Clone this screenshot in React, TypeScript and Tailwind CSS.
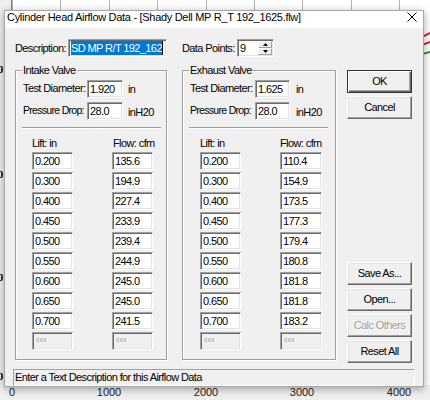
import React from 'react';

const INTAKE: [string, string][] = [
  ['0.200', '135.6'],
  ['0.300', '194.9'],
  ['0.400', '227.4'],
  ['0.450', '233.9'],
  ['0.500', '239.4'],
  ['0.550', '244.9'],
  ['0.600', '245.0'],
  ['0.650', '245.0'],
  ['0.700', '241.5'],
];

const EXHAUST: [string, string][] = [
  ['0.200', '110.4'],
  ['0.300', '154.9'],
  ['0.400', '173.5'],
  ['0.450', '177.3'],
  ['0.500', '179.4'],
  ['0.550', '180.8'],
  ['0.600', '181.8'],
  ['0.650', '181.8'],
  ['0.700', '183.2'],
];

const AXIS_X = ['0', '1000', '2000', '3000', '4000'];
const AXIS_Y = [66, 171, 274, 373];

// classic sunken edit box edge
const sunken =
  'border border-t-[#a0a0a0] border-l-[#a0a0a0] border-b-white border-r-white shadow-[inset_1px_1px_0_#696969,inset_-1px_-1px_0_#e3e3e3]';

function Field({ value, className = '' }: { value?: string; className?: string }): JSX.Element {
  if (value === undefined) {
    // disabled empty cell
    return (
      <div className={`${sunken} h-[18px] bg-[#f0f0f0] pl-[3px] pt-[3px] ${className}`}>
        <span className="block text-[7px] leading-[7px] text-[#a0a0a0] tracking-normal">xxx</span>
      </div>
    );
  }
  return (
    <div className={`${sunken} h-[18px] bg-white pl-[2px] flex items-center ${className}`}>
      <span className="leading-[13px]">{value}</span>
    </div>
  );
}

function Btn({
  children,
  isDefault = false,
  disabled = false,
  className = '',
}: {
  children: React.ReactNode;
  isDefault?: boolean;
  disabled?: boolean;
  className?: string;
}): JSX.Element {
  const edge = isDefault
    ? 'border border-[#333] shadow-[inset_1px_1px_0_#fff,inset_-1px_-1px_0_#696969,inset_-2px_-2px_0_#a0a0a0]'
    : 'border border-t-white border-l-white border-b-[#696969] border-r-[#696969] shadow-[inset_-1px_-1px_0_#a0a0a0,inset_1px_1px_0_#e3e3e3]';
  return (
    <div
      className={`${edge} h-[23px] w-[65px] bg-[#f0f0f0] flex items-center justify-center whitespace-nowrap ${
        disabled ? 'text-[#a0a0a0] [text-shadow:1px_1px_0_#fff]' : 'text-black'
      } ${className}`}
    >
      {children}
    </div>
  );
}

type GroupProps = {
  title: string;
  width: string;
  labelW: string;
  inputW: string;
  unitMl: string;
  gridPl: string;
  headW: string;
  flowW: string;
  diameter: string;
  rows: [string, string][];
};

function ValveGroup(p: GroupProps): JSX.Element {
  return (
    <div
      className={`relative ${p.width} h-[290px] border border-[#a0a0a0] shadow-[inset_1px_1px_0_#fff,1px_1px_0_#fff] pt-[9px] pl-[7px] whitespace-nowrap`}
    >
      <span className="absolute -top-[7px] left-[6px] px-[1px] bg-[#f0f0f0] leading-[13px]">{p.title}</span>

      <div className="flex items-center h-[18px]">
        <span className={`${p.labelW} shrink-0 leading-[13px] -mt-[1px]`}>Test Diameter:</span>
        <Field value={p.diameter} className={`${p.inputW} shrink-0`} />
        <span className={`${p.unitMl} leading-[13px]`}>in</span>
      </div>
      <div className="flex items-center h-[18px] mt-[4px]">
        <span className={`${p.labelW} shrink-0 leading-[13px] -mt-[2px] text-[10.5px] tracking-[-0.7px]`}>
          Pressure Drop:
        </span>
        <Field value="28.0" className={`${p.inputW} shrink-0`} />
        <span className={`${p.unitMl} leading-[13px] mt-[3px]`}>inH20</span>
      </div>

      <div className="-ml-[1px] mt-[7px] w-[139px] border-t border-t-[#a0a0a0] border-b border-b-white" />

      <div className={`flex ${p.gridPl} mt-[8px] leading-[13px]`}>
        <span className={p.headW}>Lift: in</span>
        <span>Flow: cfm</span>
      </div>

      <div className={`flex flex-col gap-[2px] mt-[2px] ${p.gridPl}`}>
        {p.rows.map(([lift, flow]) => (
          <div key={lift} className="flex">
            <Field value={lift} className="w-[41px]" />
            <Field value={flow} className={`ml-[39px] ${p.flowW}`} />
          </div>
        ))}
        <div className="flex">
          <Field className="w-[41px]" />
          <Field className={`ml-[39px] ${p.flowW}`} />
        </div>
      </div>
    </div>
  );
}

function App(): JSX.Element {
  return (
    <div className="relative w-[430px] h-[400px] overflow-hidden bg-[#f0f0f0] text-black font-['Liberation_Sans',Arial,sans-serif]">
      {/* chart behind the dialog */}
      <div className="absolute left-[11px] top-0 w-[419px] h-[385px] bg-white border-l border-l-[#808080]" />
      {Array.from({ length: 9 }).map((_, i) => (
        <div
          key={i}
          className="absolute top-0 h-[385px] w-px bg-[#b4b4b4]"
          style={{ left: Math.round(12 + i * 48.4) }}
        />
      ))}
      {AXIS_X.map((t, i) => (
        <span
          key={t}
          className="absolute top-[386px] -translate-x-1/2 text-[11px] leading-[12px] text-[#222]"
          style={{ left: Math.round(12 + i * 96.8) }}
        >
          {t}
        </span>
      ))}
      {/* y axis tick labels peeking out at the left edge */}
      {AXIS_Y.map((y) => (
        <div
          key={y}
          className="absolute left-0 w-[3px] h-[7px] border-r-2 border-y border-[#333] rounded-r-[2px]"
          style={{ top: y }}
        />
      ))}
      <svg className="absolute left-[422px] top-[28px]" width="8" height="32" viewBox="0 0 8 32">
        <path d="M0 9 L8 5" stroke="#e02020" strokeWidth="2" fill="none" />
        <path d="M0 17 L8 14" stroke="#e02020" strokeWidth="2" fill="none" />
        <path d="M0 26 L8 24" stroke="#20a020" strokeWidth="2" fill="none" />
      </svg>

      {/* dialog window */}
      <div className="absolute left-[4px] top-[10px] w-[420px] h-[377px] bg-[#f0f0f0] border border-[#a8a8a8] shadow-[0_2px_8px_rgba(0,0,0,0.35)] text-[11px] tracking-[-0.6px]">
        <div className="h-[17px] bg-white flex items-start justify-between pl-[2px] pr-[6px]">
          <span className="text-[11px] leading-[10px] tracking-[-0.3px] mt-[1px] whitespace-nowrap">
            Cylinder Head Airflow Data - [Shady Dell MP R_T 192_1625.flw]
          </span>
          <svg width="10" height="10" viewBox="0 0 10 10" className="mt-[1px]">
            <path d="M0.5 0.5 L9.5 9.5 M9.5 0.5 L0.5 9.5" stroke="#000" strokeWidth="1" fill="none" />
          </svg>
        </div>

        <div className="pl-[10px] pt-[11px] pb-[3px]">
          <div className="flex items-center h-[18px] whitespace-nowrap">
            <span className="w-[53px] leading-[13px]">Description:</span>
            <div className={`${sunken} w-[99px] h-[18px] bg-white pl-[2px] flex items-center overflow-hidden`}>
              <span className="bg-[#0078d7] text-white leading-[14px] h-[14px]">SD MP R/T 192_162</span>
              <span className="w-px h-[14px] bg-black" />
            </div>
            <span className="ml-[15px] w-[55px] leading-[13px]">Data Points:</span>
            <div className={`${sunken} w-[37px] h-[18px] bg-white flex`}>
              <span className="flex-1 pl-[2px] leading-[16px]">9</span>
              <div className="w-[15px] flex flex-col py-[1px] pr-[1px]">
                <div className="h-[7px] border border-t-white border-l-white border-b-[#a0a0a0] border-r-[#a0a0a0] bg-[#f0f0f0] flex items-center justify-center">
                  <svg width="5" height="3" viewBox="0 0 5 3">
                    <path d="M2.5 0 L5 3 L0 3 Z" fill="#000" />
                  </svg>
                </div>
                <div className="h-[7px] border border-t-white border-l-white border-b-[#a0a0a0] border-r-[#a0a0a0] bg-[#f0f0f0] flex items-center justify-center">
                  <svg width="5" height="3" viewBox="0 0 5 3">
                    <path d="M0 0 L5 0 L2.5 3 Z" fill="#000" />
                  </svg>
                </div>
              </div>
            </div>
          </div>

          <div className="flex items-start mt-[13px]">
            <ValveGroup
              title="Intake Valve"
              width="w-[152px]"
              labelW="w-[64px]"
              inputW="w-[36px]"
              unitMl="ml-[5px]"
              gridPl="pl-[9px]"
              headW="w-[81px]"
              flowW="w-[41px]"
              diameter="1.920"
              rows={INTAKE}
            />
            <div className="ml-[15px]">
              <ValveGroup
                title="Exhaust Valve"
                width="w-[154px]"
                labelW="w-[65px]"
                inputW="w-[35px]"
                unitMl="ml-[6px]"
                gridPl="pl-[10px]"
                headW="w-[80px]"
                flowW="w-[42px]"
                diameter="1.625"
                rows={EXHAUST}
              />
            </div>
            <div className="ml-[11px] flex flex-col">
              <Btn isDefault>OK</Btn>
              <Btn className="mt-[3px]">Cancel</Btn>
              <Btn className="mt-[143px]">Save As...</Btn>
              <Btn className="mt-[3px]">Open...</Btn>
              <Btn className="mt-[3px]" disabled>
                Calc Others
              </Btn>
              <Btn className="mt-[3px]">Reset All</Btn>
            </div>
          </div>

          <div className="-ml-[2px] mt-[6px] w-[402px] h-[17px] border border-t-[#a0a0a0] border-l-[#a0a0a0] border-b-white border-r-white pl-[1px] leading-[15px] whitespace-nowrap">
            Enter a Text Description for this Airflow Data
          </div>
        </div>
      </div>
    </div>
  );
}

export default App;
